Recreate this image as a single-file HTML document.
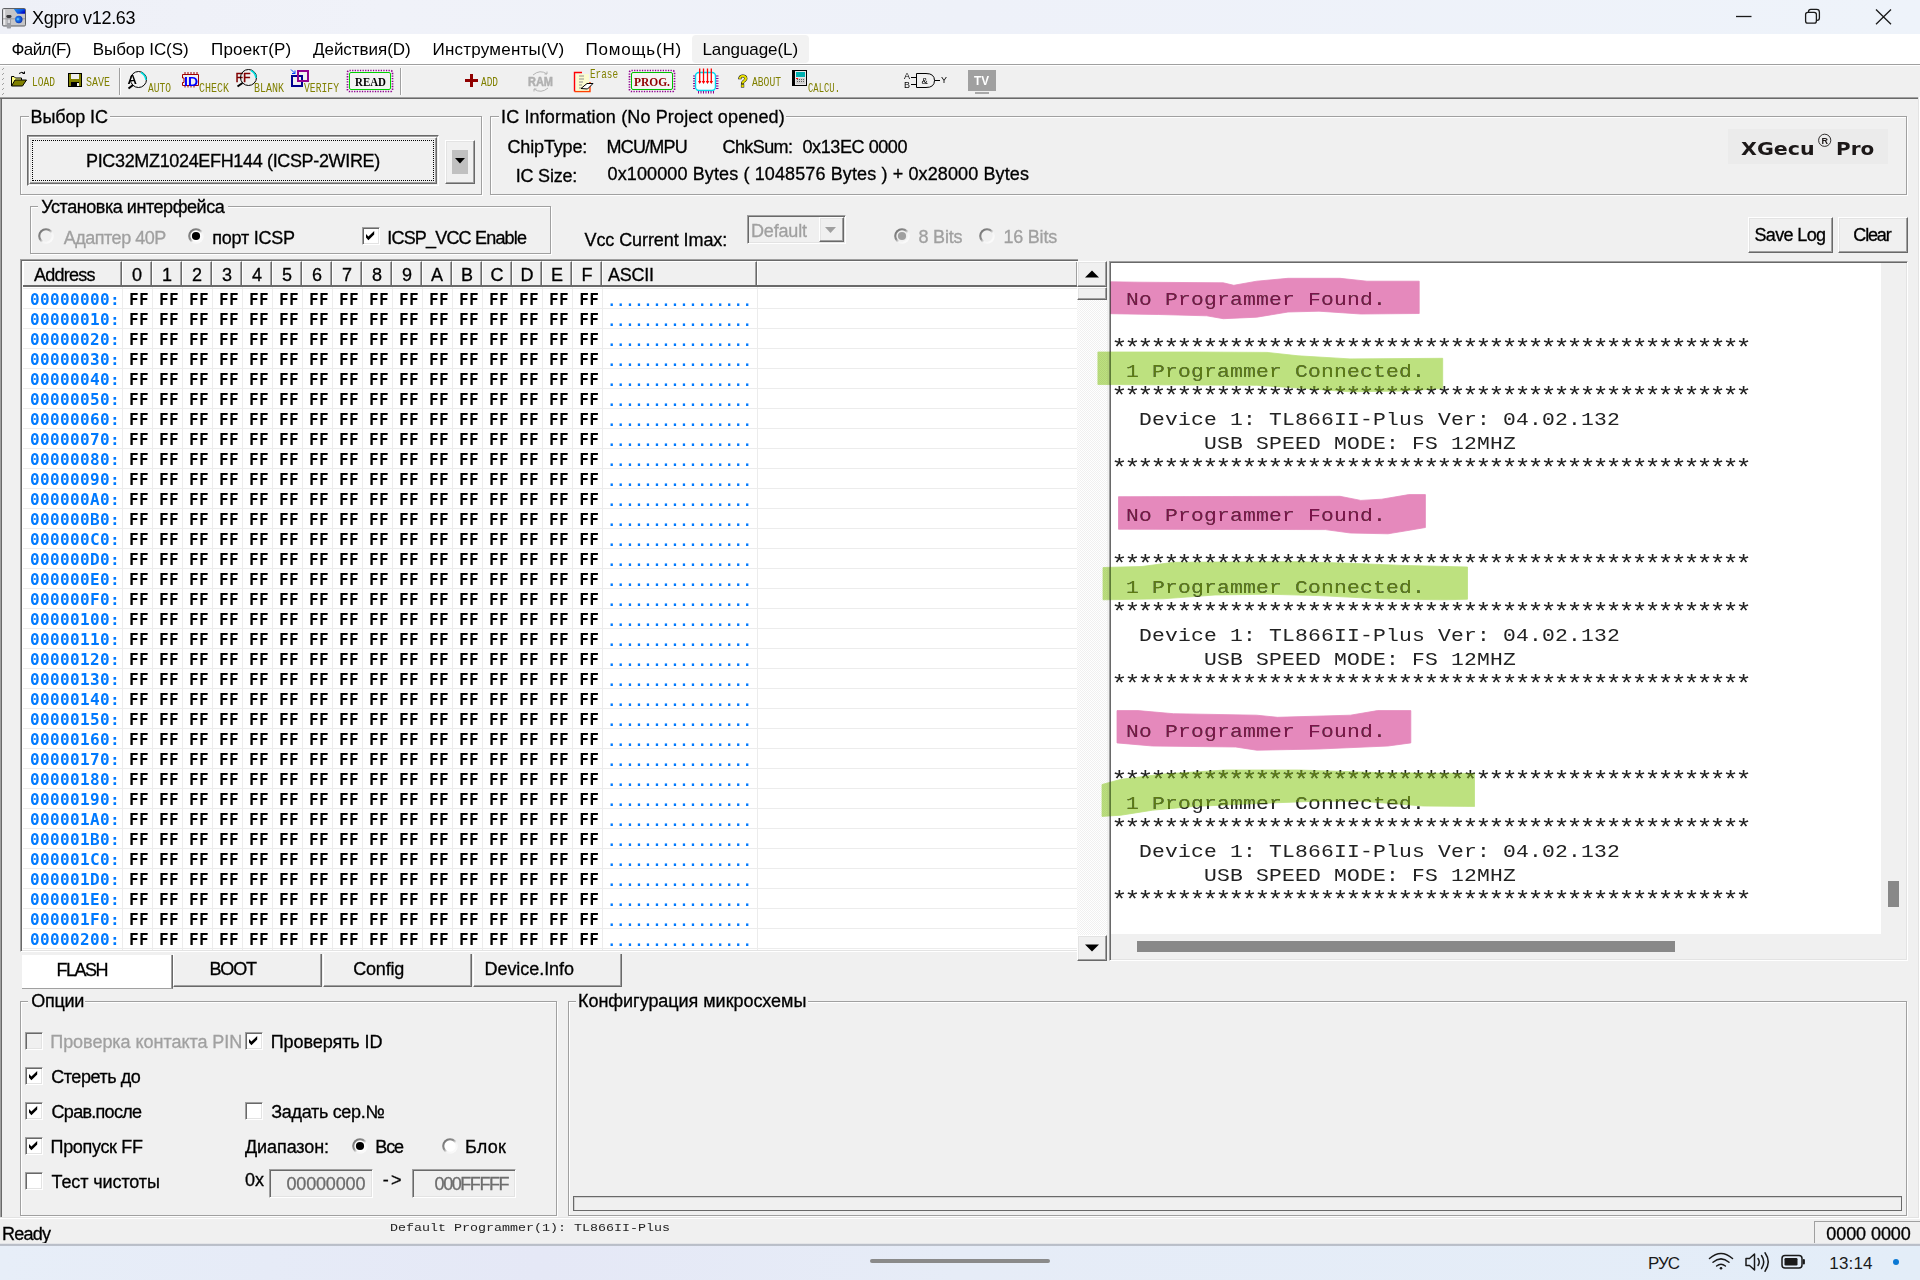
<!DOCTYPE html><html lang="ru"><head><meta charset="utf-8"><title>Xgpro v12.63</title><style>
*{box-sizing:border-box;margin:0;padding:0}
html,body{width:1920px;height:1280px;overflow:hidden;background:#f0f0f0}
body{position:relative;font-family:"Liberation Sans",sans-serif;font-size:18px;color:#000}
.a{position:absolute}
.t{position:absolute;white-space:pre;line-height:20px;height:20px;-webkit-text-stroke:0.3px}
.grp{position:absolute;border:1px solid #a0a0a0;box-shadow:1px 1px 0 #fff, inset 1px 1px 0 #fff}
.gap{position:absolute;height:3px;background:#f0f0f0}
.btn{position:absolute;background:#f0f0f0;border:1px solid;border-color:#fff #696969 #696969 #fff;box-shadow:inset -1px -1px 0 #a0a0a0, inset 1px 1px 0 #e3e3e3}
.sunk{position:absolute;border:1px solid;border-color:#a0a0a0 #fff #fff #a0a0a0;box-shadow:inset 1px 1px 0 #696969, inset -1px -1px 0 #e3e3e3}
.cb{position:absolute;width:18px;height:18px;background:#fff;border:1px solid;border-color:#a0a0a0 #fff #fff #a0a0a0;box-shadow:inset 1px 1px 0 #696969, inset -1px -1px 0 #e3e3e3}
.cb.d{background:#f0f0f0}
.cb svg{position:absolute;left:3px;top:3px}
.rd{position:absolute;width:16px;height:16px}
.mono{font-family:"DejaVu Sans Mono","Liberation Mono",monospace;font-weight:bold;font-size:16px}
.hx{position:absolute;white-space:pre;line-height:20px;height:20px}
.st{font-size:27px !important;letter-spacing:-3.2px !important}
.log{position:absolute;white-space:pre;font-family:"Liberation Mono",monospace;font-size:21.33px;letter-spacing:0.2px;line-height:24px;height:24px;color:#222;transform-origin:0 17.7px;transform:scaleY(0.9)}
</style></head><body>
<div class="a" style="left:0;top:0;width:1920px;height:34px;background:linear-gradient(90deg,#eef0f7 0%,#f0f2f9 20%,#eef1f9 50%,#eef3fa 100%)"></div>
<svg class="a" style="left:2px;top:7px" width="25" height="23" viewBox="2 7 25 23"><defs><linearGradient id="tb1" x1="0" y1="0" x2="1" y2="0.6"><stop offset="0" stop-color="#1e8ae8"/><stop offset="0.6" stop-color="#0a5ce6"/><stop offset="1" stop-color="#0008c8"/></linearGradient><radialGradient id="tb2" cx="0.38" cy="0.45" r="0.65"><stop offset="0" stop-color="#6adcff"/><stop offset="0.35" stop-color="#1a74e8"/><stop offset="1" stop-color="#0a2cb0"/></radialGradient></defs><rect x="2.5" y="8.5" width="23" height="17.5" rx="1.2" fill="#c6c6c8" stroke="#5e6064"/><path d="M13.800 9H25V13.700H17.300Z" fill="url(#tb1)"/><rect x="3.400" y="9.500" width="1.700" height="15.500" fill="#ececee"/><path d="M3 18.800H25" stroke="#8c8c90" stroke-width="0.800"/><rect x="6.300" y="15" width="5.200" height="3" rx="1.400" fill="#38383c"/><rect x="6.800" y="18.500" width="4.200" height="10" rx="0.800" fill="#9c9ea4"/><rect x="7.600" y="19.500" width="2.400" height="3.500" fill="#d8d8dc"/><circle cx="18.800" cy="19.500" r="3.700" fill="url(#tb2)"/></svg>
<div class="t" style="left:32.00px;top:8px;letter-spacing:-0.32px;-webkit-text-stroke:0">Xgpro v12.63</div>
<svg class="a" style="left:1730px;top:6px" width="170" height="24" viewBox="0 0 170 24" fill="none" stroke="#1a1a1a" stroke-width="1.3"><path d="M6 10.5H21.5"/><rect x="75.6" y="6.4" width="10.8" height="10.8" rx="2.2"/><path d="M78.500 6.4V5.7Q78.5 3.4 80.8 3.4H86.6Q89.4 3.4 89.4 6.2V12Q89.4 14.3 87.1 14.3H86.4"/><path d="M146 3.500L161 18.300M161 3.500L146 18.300"/></svg>
<div class="a" style="left:0;top:34px;width:1920px;height:30px;background:#fff"></div>
<div class="a" style="left:692px;top:35px;width:117px;height:28px;border-radius:4px;background:#f2f2f2"></div>
<div class="t" style="left:11.50px;top:40px;letter-spacing:-0.60px;font-size:17px;color:#000;-webkit-text-stroke:0">Файл(F)</div>
<div class="t" style="left:92.75px;top:40px;letter-spacing:-0.07px;font-size:17px;color:#000;-webkit-text-stroke:0">Выбор IC(S)</div>
<div class="t" style="left:211.00px;top:40px;letter-spacing:0.19px;font-size:17px;color:#000;-webkit-text-stroke:0">Проект(P)</div>
<div class="t" style="left:313.00px;top:40px;letter-spacing:-0.04px;font-size:17px;color:#000;-webkit-text-stroke:0">Действия(D)</div>
<div class="t" style="left:432.50px;top:40px;letter-spacing:0.23px;font-size:17px;color:#000;-webkit-text-stroke:0">Инструменты(V)</div>
<div class="t" style="left:585.50px;top:40px;letter-spacing:0.80px;font-size:17px;color:#000;-webkit-text-stroke:0">Помощь(H)</div>
<div class="t" style="left:702.50px;top:40px;letter-spacing:-0.08px;font-size:17px;color:#000;-webkit-text-stroke:0">Language(L)</div>
<div class="a" style="left:0;top:64px;width:1920px;height:35px;background:#f0f0f0;border-top:1px solid #a0a0a0;border-bottom:1px solid #696969;box-shadow:inset 0 1px 0 #fff, inset 0 -1px 0 #a0a0a0"></div>
<svg class="a" style="left:0;top:64px" width="1010" height="34" viewBox="0 64 1010 34" shape-rendering="crispEdges">
<g fill="#a0a0a0"><rect x="2" y="69" width="1" height="1"/><rect x="3" y="68" width="1" height="1"/><rect x="2" y="74" width="1" height="1"/><rect x="3" y="73" width="1" height="1"/><rect x="2" y="79" width="1" height="1"/><rect x="3" y="78" width="1" height="1"/><rect x="2" y="84" width="1" height="1"/><rect x="3" y="83" width="1" height="1"/><rect x="2" y="89" width="1" height="1"/><rect x="3" y="88" width="1" height="1"/><rect x="2" y="94" width="1" height="1"/><rect x="3" y="93" width="1" height="1"/></g>
<g font-family="Liberation Mono, monospace" font-size="10" fill="#808000" shape-rendering="auto">
<text x="32" y="66" transform="translate(0,-0) scale(1,1.3)" textLength="23" lengthAdjust="spacingAndGlyphs">LOAD</text>
<text x="86" y="66" transform="scale(1,1.3)" textLength="24" lengthAdjust="spacingAndGlyphs">SAVE</text>
<text x="148" y="71" transform="scale(1,1.3)" textLength="23" lengthAdjust="spacingAndGlyphs">AUTO</text>
<text x="199" y="71" transform="scale(1,1.3)" textLength="30" lengthAdjust="spacingAndGlyphs">CHECK</text>
<text x="254" y="71" transform="scale(1,1.3)" textLength="30" lengthAdjust="spacingAndGlyphs">BLANK</text>
<text x="304" y="71" transform="scale(1,1.3)" textLength="35" lengthAdjust="spacingAndGlyphs">VERIFY</text>
<text x="481" y="66.5" transform="scale(1,1.3)" textLength="17" lengthAdjust="spacingAndGlyphs">ADD</text>
<text x="590" y="60" transform="scale(1,1.3)" textLength="28" lengthAdjust="spacingAndGlyphs">Erase</text>
<text x="752" y="66.5" transform="scale(1,1.3)" textLength="29" lengthAdjust="spacingAndGlyphs">ABOUT</text>
<text x="808" y="71" transform="scale(1,1.3)" textLength="32" lengthAdjust="spacingAndGlyphs">CALCU.</text>
</g>
<!-- LOAD folder -->
<g shape-rendering="auto"><path d="M11.5 86V76.5H14L15.5 78H21.5V80" fill="#ffff80" stroke="#000"/><path d="M11.5 86L15 80H26.5L22.5 86Z" fill="#808000" stroke="#000"/><path d="M19 73.5Q22 71 24.5 73.5M24.5 73.5V71.5M24.5 73.5H22.5" fill="none" stroke="#000"/></g>
<!-- SAVE floppy -->
<rect x="68.5" y="73.5" width="13" height="13" fill="#808000" stroke="#000"/><rect x="71" y="74" width="8" height="5" fill="#f0f0f0"/><rect x="71" y="82" width="8" height="4" fill="#000"/><rect x="77" y="83" width="2" height="3" fill="#f0f0f0"/>
<!-- separator -->
<rect x="119" y="68" width="1" height="27" fill="#a0a0a0"/><rect x="120" y="68" width="1" height="27" fill="#fff"/>
<!-- AUTO -->
<g shape-rendering="auto"><circle cx="138.5" cy="79.5" r="8" fill="#f4f4f4" stroke="#000"/><path d="M141 72.5Q145.5 75 146 80" fill="none" stroke="#00e0e0" stroke-width="1.6"/><path d="M128.5 88.5L133 85" stroke="#000" stroke-width="2"/><text x="127.5" y="84" font-family="Liberation Sans, sans-serif" font-weight="bold" font-size="13" fill="#000">A</text></g>
<!-- ID CHECK -->
<g shape-rendering="auto"><path d="M182.500 74.500H198.500V85.500H182.500V82.500H184V78H182.500Z" fill="none" stroke="#a00000"/><path d="M185 72v2M188 72v2M191 72v2M194 72v2M197 72v2M185 86v1.500M188 86v1.500M191 86v1.500M194 86v1.500" stroke="#a00000"/><text x="184" y="85.500" font-family="Liberation Sans, sans-serif" font-weight="bold" font-size="12" fill="#0000ff" textLength="14" lengthAdjust="spacingAndGlyphs">ID</text></g>
<!-- BLANK -->
<g shape-rendering="auto"><text x="235.500" y="82" font-family="Liberation Sans, sans-serif" font-size="13.500" fill="#800000" stroke="#800000" stroke-width="0.5" textLength="15" lengthAdjust="spacingAndGlyphs">FF</text><circle cx="248.500" cy="77.500" r="8" fill="none" stroke="#000"/><path d="M251 70.500Q255.500 73 256 78" fill="none" stroke="#00e0e0" stroke-width="1.600"/><path d="M237.500 86.500L242.500 83" stroke="#000" stroke-width="2"/></g>
<!-- VERIFY -->
<rect x="292" y="76" width="10" height="10" fill="none" stroke="#000090" stroke-width="2"/><rect x="298" y="71" width="10" height="10" fill="none" stroke="#900090" stroke-width="2"/><path d="M291 69.500L295 73.500M295 73.500V70.500M295 73.500H292" stroke="#0040ff" fill="none" shape-rendering="auto"/>
<!-- READ -->
<rect x="347.500" y="70.500" width="45" height="21" rx="2" fill="#f4f4f4" stroke="#900090" stroke-width="1.7" stroke-dasharray="1.3 1.3" shape-rendering="auto"/><rect x="349.500" y="72.500" width="41" height="17" rx="1.500" fill="#f4f4f4" stroke="#00d000" shape-rendering="auto"/>
<text x="355" y="86" font-family="Liberation Serif, serif" font-weight="bold" font-size="13" fill="#000" textLength="31" lengthAdjust="spacingAndGlyphs" shape-rendering="auto">READ</text>
<rect x="400" y="68" width="1" height="27" fill="#a0a0a0"/><rect x="401" y="68" width="1" height="27" fill="#fff"/>
<!-- ADD -->
<rect x="470" y="74" width="3" height="13" fill="#900000"/><rect x="465" y="79" width="13" height="3" fill="#900000"/>
<!-- RAM -->
<g shape-rendering="auto"><text x="528" y="86" font-family="Liberation Sans, sans-serif" font-weight="bold" font-size="12.500" fill="#b0b0b0" stroke="#b0b0b0" stroke-width="0.5" textLength="25" lengthAdjust="spacingAndGlyphs">RAM</text><path d="M533 75Q540 69 547 74M547 74V71.500M547 74H544.500M548 88Q541 94 534 89M534 89V91.500M534 89H536.500" fill="none" stroke="#b4b4b4"/></g>
<!-- Erase -->
<g shape-rendering="auto"><path d="M574.500 91.500V72.500H582" fill="none" stroke="#ff0000" stroke-width="1.400"/><path d="M574.500 91.500H590V82" fill="none" stroke="#ff4000" stroke-width="1.400"/><rect x="576" y="74" width="13" height="17" fill="#ffffc0" opacity="0.700"/><path d="M579 76h5M579 79h5M579 82h4M579 85h3M579 88h2" stroke="#909090"/><path d="M581 88.500L587 83.500H593L587.500 89Z" fill="#fff" stroke="#000"/></g>
<!-- PROG -->
<rect x="629.500" y="70.500" width="45" height="21" rx="2" fill="#f4f4f4" stroke="#900090" stroke-width="1.7" stroke-dasharray="1.3 1.3" shape-rendering="auto"/><rect x="631.500" y="72.500" width="41" height="17" rx="1.500" fill="#f4f4f4" stroke="#00c000" shape-rendering="auto"/>
<text x="634" y="86" font-family="Liberation Serif, serif" font-weight="bold" font-size="13" fill="#900000" textLength="36" lengthAdjust="spacingAndGlyphs" shape-rendering="auto">PROG.</text>
<!-- chip arrows -->
<g shape-rendering="auto"><rect x="695.5" y="72.5" width="20" height="18" rx="3.5" fill="#f8ffff" stroke="#00d8f0" stroke-width="1.4"/><path d="M693 76h2M693 78.500h2M693 81h2M693 83.500h2M693 86h2M693 88.500h2M716 76h2.500M716 78.500h2.500M716 81h2.500M716 83.500h2.500M716 86h2.500M716 88.500h2.500M698.500 91v2.500M701 91v2.500M703.500 91v2.500M706 91v2.500M708.500 91v2.500M711 91v2.500M713.500 91v2.500" stroke="#900090"/><path d="M699.700 68.500V83M703.500 68.500V83M707.500 68.500V83M711.300 68.500V83" stroke="#ff0000" stroke-width="1.300"/><path d="M698 81h3.400l-1.700 3zM701.800 81h3.400l-1.700 3zM705.800 81h3.400l-1.700 3zM709.600 81h3.400l-1.700 3z" fill="#ff0000"/></g>
<!-- ? -->
<text x="738" y="86.500" font-family="Liberation Sans, sans-serif" font-weight="bold" font-size="16" fill="#e8e000" stroke="#000" stroke-width="1" paint-order="stroke" shape-rendering="auto">?</text>
<!-- CALCU icon -->
<rect x="792.500" y="70.500" width="14" height="15" fill="#e8e8e8" stroke="#000"/><rect x="792" y="70" width="3" height="16" fill="#000"/><rect x="796" y="72" width="9" height="5" fill="#00b0b0"/><rect x="796" y="78" width="9" height="6" fill="#d0d0d0"/><path d="M797 79h1M799 79h1M801 79h1M803 79h1M797 81h1M799 81h1M801 81h1M803 81h1" stroke="#606060"/><rect x="796" y="78" width="2" height="1" fill="#ff0000"/>
<!-- AND gate -->
<g shape-rendering="auto" fill="none" stroke="#000"><path d="M916.500 73.500H926Q934.500 73.500 934.500 80.500Q934.500 87.500 926 87.500H916.500Z"/><path d="M911 77.500H916.500M911 84.500H916.500M934.500 80.500H940"/></g>
<g font-family="Liberation Sans, sans-serif" font-size="9" fill="#000" shape-rendering="auto"><text x="904" y="79">A</text><text x="904" y="88">B</text><text x="941" y="83">Y</text><text x="921.500" y="84" font-size="9.500">&amp;</text></g>
<!-- TV -->
<rect x="968" y="70" width="28" height="21" fill="#a0a0a0"/><rect x="975" y="92" width="14" height="2" fill="#a8a8a8"/>
<text x="974" y="85" font-family="Liberation Sans, sans-serif" font-weight="bold" font-size="13" fill="#fff" textLength="15" lengthAdjust="spacingAndGlyphs" shape-rendering="auto">TV</text>
</svg>

<div class="a" style="left:0;top:99px;width:1px;height:1118px;background:#a0a0a0"></div>
<div class="a" style="left:1px;top:99px;width:1px;height:1118px;background:#696969"></div>
<div class="a" style="left:1918px;top:97px;width:1px;height:1121px;background:#e3e3e3"></div>
<div class="a" style="left:1919px;top:97px;width:1px;height:1122px;background:#fff"></div>
<svg class="a" style="left:0;top:0" width="0" height="0"><defs><linearGradient id="rg" x1="0" y1="0" x2="1" y2="1"><stop offset="0" stop-color="#6a6a6a"/><stop offset="0.42" stop-color="#8c8c8c"/><stop offset="0.58" stop-color="#f4f4f4"/><stop offset="1" stop-color="#fff"/></linearGradient></defs></svg>
<div class="grp" style="left:20px;top:116px;width:462px;height:79px"></div>
<div class="gap" style="left:28.5px;top:115px;width:81.5px"></div>
<div class="t" style="left:30.50px;top:107px;letter-spacing:-0.11px">Выбор IC</div>
<div class="sunk" style="left:27px;top:135px;width:412px;height:51px;border-color:#696969 #fff #fff #696969;box-shadow:inset 1px 1px 0 #a0a0a0"></div>
<div class="btn" style="left:29px;top:137px;width:408px;height:47px;"></div>
<div class="a" style="left:32px;top:140px;width:402px;height:41px;border:1px dotted #000"></div>
<div class="t" style="left:86.00px;top:151px;letter-spacing:-0.34px">PIC32MZ1024EFH144 (ICSP-2WIRE)</div>
<div class="btn" style="left:445px;top:140px;width:30px;height:44px"></div>
<div class="a" style="left:452px;top:150px;width:16px;height:24px;background:#c0c0c0"></div>
<svg class="a" style="left:455px;top:158px" width="10" height="6"><path d="M0 0H10L5 5.5Z" fill="#000"/></svg>
<div class="grp" style="left:490px;top:116px;width:1417px;height:79px"></div>
<div class="gap" style="left:499px;top:115px;width:286.75px"></div>
<div class="t" style="left:501.00px;top:107px;letter-spacing:0.14px">IC Information (No Project opened)</div>
<div class="t" style="left:507.50px;top:137px;letter-spacing:-0.16px">ChipType:</div>
<div class="t" style="left:606.50px;top:137px;letter-spacing:-0.79px">MCU/MPU</div>
<div class="t" style="left:722.50px;top:137px;letter-spacing:-0.59px">ChkSum:</div>
<div class="t" style="left:802.50px;top:137px;letter-spacing:-0.41px">0x13EC 0000</div>
<div class="t" style="left:515.75px;top:166px;letter-spacing:-0.22px">IC Size:</div>
<div class="t" style="left:607.50px;top:164px;letter-spacing:0.12px">0x100000 Bytes ( 1048576 Bytes ) + 0x28000 Bytes</div>
<div class="a" style="left:1728px;top:129px;width:160px;height:35px;background:#ebebeb"></div>
<svg class="a" style="left:1728px;top:129px" width="160" height="35" viewBox="1728 129 160 35"><g font-family="DejaVu Sans, Liberation Sans, sans-serif" font-weight="bold" font-size="18.4" fill="#1c1818"><text x="1741" y="155.4" textLength="73.7" lengthAdjust="spacingAndGlyphs">XGecu</text><text x="1836" y="155.4" textLength="38.2" lengthAdjust="spacingAndGlyphs">Pro</text></g><circle cx="1824.7" cy="140.3" r="6.1" fill="none" stroke="#1c1818" stroke-width="0.9"/><text x="1821.6" y="143.5" font-family="Liberation Sans, sans-serif" font-weight="bold" font-size="9" fill="#1c1818">R</text></svg>
<div class="grp" style="left:30px;top:206px;width:521px;height:48px"></div>
<div class="gap" style="left:38.25px;top:205px;width:189.5px"></div>
<div class="t" style="left:41.25px;top:197px;letter-spacing:-0.45px">Установка интерфейса</div>
<svg class="rd" style="left:38px;top:228px" width="16" height="16" viewBox="0 0 16 16"><circle cx="8" cy="8" r="7.8" fill="url(#rg)"/><circle cx="8" cy="8" r="5.7" fill="#f0f0f0"/></svg>
<div class="t" style="left:63.75px;top:228px;letter-spacing:-0.49px;color:#a0a0a0">Адаптер 40P</div>
<svg class="rd" style="left:188px;top:228px" width="16" height="16" viewBox="0 0 16 16"><circle cx="8" cy="8" r="7.8" fill="url(#rg)"/><circle cx="8" cy="8" r="5.7" fill="#fff"/><circle cx="8" cy="8" r="4.1" fill="#000"/></svg>
<div class="t" style="left:212.25px;top:228px;letter-spacing:-0.23px">порт ICSP</div>
<div class="cb" style="left:362px;top:227px"><svg width="10" height="10" viewBox="0 0 10 10"><path d="M0 3L2.4 5.6L8.2 0V3.6L2.4 9.2L0 6.6Z" fill="#000"/></svg></div>
<div class="t" style="left:387.25px;top:228px;letter-spacing:-0.81px">ICSP_VCC Enable</div>
<div class="t" style="left:584.50px;top:230px;letter-spacing:-0.08px">Vcc Current Imax:</div>
<div class="sunk" style="left:747px;top:215px;width:99px;height:29px;background:#f0f0f0"></div>
<div class="t" style="left:751.00px;top:221px;letter-spacing:-0.17px;color:#a0a0a0">Default</div>
<div class="btn" style="left:819px;top:217px;width:25px;height:25px"></div>
<svg class="a" style="left:825px;top:227px" width="11" height="6"><path d="M0 0H11L5.5 6Z" fill="#a0a0a0"/></svg>
<svg class="rd" style="left:894px;top:228px" width="16" height="16" viewBox="0 0 16 16"><circle cx="8" cy="8" r="7.8" fill="url(#rg)"/><circle cx="8" cy="8" r="5.7" fill="#f0f0f0"/><circle cx="8" cy="8" r="4.1" fill="#a0a0a0"/></svg>
<div class="t" style="left:918.50px;top:227px;letter-spacing:-0.20px;color:#a0a0a0">8 Bits</div>
<svg class="rd" style="left:979px;top:228px" width="16" height="16" viewBox="0 0 16 16"><circle cx="8" cy="8" r="7.8" fill="url(#rg)"/><circle cx="8" cy="8" r="5.7" fill="#f0f0f0"/></svg>
<div class="t" style="left:1003.40px;top:227px;letter-spacing:-0.20px;color:#a0a0a0">16 Bits</div>
<div class="btn" style="left:1748px;top:217px;width:85px;height:36px"></div>
<div class="t" style="left:1754.50px;top:225px;letter-spacing:-0.65px">Save Log</div>
<div class="btn" style="left:1838px;top:217px;width:70px;height:36px"></div>
<div class="t" style="left:1853.30px;top:225px;letter-spacing:-1.15px">Clear</div>
<div class="a" style="left:20px;top:259px;width:1058px;height:693px;background:#fff;border-left:1px solid #a0a0a0;border-top:1px solid #a0a0a0;border-bottom:1px solid #fff;box-shadow:inset 1px 1px 0 #696969, inset 0 -1px 0 #e3e3e3"></div>
<div class="a" style="left:23px;top:261px;width:1055px;height:26px;background:#f0f0f0;border-bottom:2px solid #696969"></div>
<div class="a" style="left:23px;top:261px;width:99px;height:24px;border-left:1px solid #fff;border-top:1px solid #fff;border-right:1px solid #696969;box-shadow:inset -1px 0 0 #a0a0a0"></div>
<div class="t" style="left:34.00px;top:265px;letter-spacing:-0.74px">Address</div>
<div class="a" style="left:122px;top:261px;width:30px;height:24px;border-left:1px solid #fff;border-top:1px solid #fff;border-right:1px solid #696969;box-shadow:inset -1px 0 0 #a0a0a0"></div>
<div class="t" style="left:122px;top:265px;width:30px;text-align:center">0</div>
<div class="a" style="left:152px;top:261px;width:30px;height:24px;border-left:1px solid #fff;border-top:1px solid #fff;border-right:1px solid #696969;box-shadow:inset -1px 0 0 #a0a0a0"></div>
<div class="t" style="left:152px;top:265px;width:30px;text-align:center">1</div>
<div class="a" style="left:182px;top:261px;width:30px;height:24px;border-left:1px solid #fff;border-top:1px solid #fff;border-right:1px solid #696969;box-shadow:inset -1px 0 0 #a0a0a0"></div>
<div class="t" style="left:182px;top:265px;width:30px;text-align:center">2</div>
<div class="a" style="left:212px;top:261px;width:30px;height:24px;border-left:1px solid #fff;border-top:1px solid #fff;border-right:1px solid #696969;box-shadow:inset -1px 0 0 #a0a0a0"></div>
<div class="t" style="left:212px;top:265px;width:30px;text-align:center">3</div>
<div class="a" style="left:242px;top:261px;width:30px;height:24px;border-left:1px solid #fff;border-top:1px solid #fff;border-right:1px solid #696969;box-shadow:inset -1px 0 0 #a0a0a0"></div>
<div class="t" style="left:242px;top:265px;width:30px;text-align:center">4</div>
<div class="a" style="left:272px;top:261px;width:30px;height:24px;border-left:1px solid #fff;border-top:1px solid #fff;border-right:1px solid #696969;box-shadow:inset -1px 0 0 #a0a0a0"></div>
<div class="t" style="left:272px;top:265px;width:30px;text-align:center">5</div>
<div class="a" style="left:302px;top:261px;width:30px;height:24px;border-left:1px solid #fff;border-top:1px solid #fff;border-right:1px solid #696969;box-shadow:inset -1px 0 0 #a0a0a0"></div>
<div class="t" style="left:302px;top:265px;width:30px;text-align:center">6</div>
<div class="a" style="left:332px;top:261px;width:30px;height:24px;border-left:1px solid #fff;border-top:1px solid #fff;border-right:1px solid #696969;box-shadow:inset -1px 0 0 #a0a0a0"></div>
<div class="t" style="left:332px;top:265px;width:30px;text-align:center">7</div>
<div class="a" style="left:362px;top:261px;width:30px;height:24px;border-left:1px solid #fff;border-top:1px solid #fff;border-right:1px solid #696969;box-shadow:inset -1px 0 0 #a0a0a0"></div>
<div class="t" style="left:362px;top:265px;width:30px;text-align:center">8</div>
<div class="a" style="left:392px;top:261px;width:30px;height:24px;border-left:1px solid #fff;border-top:1px solid #fff;border-right:1px solid #696969;box-shadow:inset -1px 0 0 #a0a0a0"></div>
<div class="t" style="left:392px;top:265px;width:30px;text-align:center">9</div>
<div class="a" style="left:422px;top:261px;width:30px;height:24px;border-left:1px solid #fff;border-top:1px solid #fff;border-right:1px solid #696969;box-shadow:inset -1px 0 0 #a0a0a0"></div>
<div class="t" style="left:422px;top:265px;width:30px;text-align:center">A</div>
<div class="a" style="left:452px;top:261px;width:30px;height:24px;border-left:1px solid #fff;border-top:1px solid #fff;border-right:1px solid #696969;box-shadow:inset -1px 0 0 #a0a0a0"></div>
<div class="t" style="left:452px;top:265px;width:30px;text-align:center">B</div>
<div class="a" style="left:482px;top:261px;width:30px;height:24px;border-left:1px solid #fff;border-top:1px solid #fff;border-right:1px solid #696969;box-shadow:inset -1px 0 0 #a0a0a0"></div>
<div class="t" style="left:482px;top:265px;width:30px;text-align:center">C</div>
<div class="a" style="left:512px;top:261px;width:30px;height:24px;border-left:1px solid #fff;border-top:1px solid #fff;border-right:1px solid #696969;box-shadow:inset -1px 0 0 #a0a0a0"></div>
<div class="t" style="left:512px;top:265px;width:30px;text-align:center">D</div>
<div class="a" style="left:542px;top:261px;width:30px;height:24px;border-left:1px solid #fff;border-top:1px solid #fff;border-right:1px solid #696969;box-shadow:inset -1px 0 0 #a0a0a0"></div>
<div class="t" style="left:542px;top:265px;width:30px;text-align:center">E</div>
<div class="a" style="left:572px;top:261px;width:30px;height:24px;border-left:1px solid #fff;border-top:1px solid #fff;border-right:1px solid #696969;box-shadow:inset -1px 0 0 #a0a0a0"></div>
<div class="t" style="left:572px;top:265px;width:30px;text-align:center">F</div>
<div class="a" style="left:602px;top:261px;width:155px;height:24px;border-left:1px solid #fff;border-top:1px solid #fff;border-right:1px solid #696969;box-shadow:inset -1px 0 0 #a0a0a0"></div>
<div class="t" style="left:608.00px;top:265px;letter-spacing:-0.25px">ASCII</div>
<div class="a" style="left:757px;top:261px;width:321px;height:24px;border-left:1px solid #fff;border-top:1px solid #fff;border-right:1px solid #696969;box-shadow:inset -1px 0 0 #a0a0a0"></div>
<div class="a" style="left:23px;top:287px;width:1055px;height:663px;overflow:hidden;background:#fff">
<div class="a" style="left:0;top:0;width:1055px;height:663px;background-image:linear-gradient(180deg,#ececec 1px,transparent 1px);background-size:100% 20px;background-position:0 1px"></div>
<div class="a" style="left:99px;top:0;width:1px;height:663px;background:#ececec"></div>
<div class="a" style="left:129px;top:0;width:1px;height:663px;background:#ececec"></div>
<div class="a" style="left:159px;top:0;width:1px;height:663px;background:#ececec"></div>
<div class="a" style="left:189px;top:0;width:1px;height:663px;background:#ececec"></div>
<div class="a" style="left:219px;top:0;width:1px;height:663px;background:#ececec"></div>
<div class="a" style="left:249px;top:0;width:1px;height:663px;background:#ececec"></div>
<div class="a" style="left:279px;top:0;width:1px;height:663px;background:#ececec"></div>
<div class="a" style="left:309px;top:0;width:1px;height:663px;background:#ececec"></div>
<div class="a" style="left:339px;top:0;width:1px;height:663px;background:#ececec"></div>
<div class="a" style="left:369px;top:0;width:1px;height:663px;background:#ececec"></div>
<div class="a" style="left:399px;top:0;width:1px;height:663px;background:#ececec"></div>
<div class="a" style="left:429px;top:0;width:1px;height:663px;background:#ececec"></div>
<div class="a" style="left:459px;top:0;width:1px;height:663px;background:#ececec"></div>
<div class="a" style="left:489px;top:0;width:1px;height:663px;background:#ececec"></div>
<div class="a" style="left:519px;top:0;width:1px;height:663px;background:#ececec"></div>
<div class="a" style="left:549px;top:0;width:1px;height:663px;background:#ececec"></div>
<div class="a" style="left:579px;top:0;width:1px;height:663px;background:#ececec"></div>
<div class="a" style="left:734px;top:0;width:1px;height:663px;background:#ececec"></div>
<div class="hx mono" style="left:7px;top:3px;color:#007aff;letter-spacing:0.37px">00000000:</div>
<div class="hx mono" style="left:106px;top:3px;letter-spacing:0.37px">FF FF FF FF FF FF FF FF FF FF FF FF FF FF FF FF</div>
<div class="hx mono" style="left:584.6px;top:4px;color:#007aff;font-size:14px;letter-spacing:0.6px">................</div>
<div class="hx mono" style="left:7px;top:23px;color:#007aff;letter-spacing:0.37px">00000010:</div>
<div class="hx mono" style="left:106px;top:23px;letter-spacing:0.37px">FF FF FF FF FF FF FF FF FF FF FF FF FF FF FF FF</div>
<div class="hx mono" style="left:584.6px;top:24px;color:#007aff;font-size:14px;letter-spacing:0.6px">................</div>
<div class="hx mono" style="left:7px;top:43px;color:#007aff;letter-spacing:0.37px">00000020:</div>
<div class="hx mono" style="left:106px;top:43px;letter-spacing:0.37px">FF FF FF FF FF FF FF FF FF FF FF FF FF FF FF FF</div>
<div class="hx mono" style="left:584.6px;top:44px;color:#007aff;font-size:14px;letter-spacing:0.6px">................</div>
<div class="hx mono" style="left:7px;top:63px;color:#007aff;letter-spacing:0.37px">00000030:</div>
<div class="hx mono" style="left:106px;top:63px;letter-spacing:0.37px">FF FF FF FF FF FF FF FF FF FF FF FF FF FF FF FF</div>
<div class="hx mono" style="left:584.6px;top:64px;color:#007aff;font-size:14px;letter-spacing:0.6px">................</div>
<div class="hx mono" style="left:7px;top:83px;color:#007aff;letter-spacing:0.37px">00000040:</div>
<div class="hx mono" style="left:106px;top:83px;letter-spacing:0.37px">FF FF FF FF FF FF FF FF FF FF FF FF FF FF FF FF</div>
<div class="hx mono" style="left:584.6px;top:84px;color:#007aff;font-size:14px;letter-spacing:0.6px">................</div>
<div class="hx mono" style="left:7px;top:103px;color:#007aff;letter-spacing:0.37px">00000050:</div>
<div class="hx mono" style="left:106px;top:103px;letter-spacing:0.37px">FF FF FF FF FF FF FF FF FF FF FF FF FF FF FF FF</div>
<div class="hx mono" style="left:584.6px;top:104px;color:#007aff;font-size:14px;letter-spacing:0.6px">................</div>
<div class="hx mono" style="left:7px;top:123px;color:#007aff;letter-spacing:0.37px">00000060:</div>
<div class="hx mono" style="left:106px;top:123px;letter-spacing:0.37px">FF FF FF FF FF FF FF FF FF FF FF FF FF FF FF FF</div>
<div class="hx mono" style="left:584.6px;top:124px;color:#007aff;font-size:14px;letter-spacing:0.6px">................</div>
<div class="hx mono" style="left:7px;top:143px;color:#007aff;letter-spacing:0.37px">00000070:</div>
<div class="hx mono" style="left:106px;top:143px;letter-spacing:0.37px">FF FF FF FF FF FF FF FF FF FF FF FF FF FF FF FF</div>
<div class="hx mono" style="left:584.6px;top:144px;color:#007aff;font-size:14px;letter-spacing:0.6px">................</div>
<div class="hx mono" style="left:7px;top:163px;color:#007aff;letter-spacing:0.37px">00000080:</div>
<div class="hx mono" style="left:106px;top:163px;letter-spacing:0.37px">FF FF FF FF FF FF FF FF FF FF FF FF FF FF FF FF</div>
<div class="hx mono" style="left:584.6px;top:164px;color:#007aff;font-size:14px;letter-spacing:0.6px">................</div>
<div class="hx mono" style="left:7px;top:183px;color:#007aff;letter-spacing:0.37px">00000090:</div>
<div class="hx mono" style="left:106px;top:183px;letter-spacing:0.37px">FF FF FF FF FF FF FF FF FF FF FF FF FF FF FF FF</div>
<div class="hx mono" style="left:584.6px;top:184px;color:#007aff;font-size:14px;letter-spacing:0.6px">................</div>
<div class="hx mono" style="left:7px;top:203px;color:#007aff;letter-spacing:0.37px">000000A0:</div>
<div class="hx mono" style="left:106px;top:203px;letter-spacing:0.37px">FF FF FF FF FF FF FF FF FF FF FF FF FF FF FF FF</div>
<div class="hx mono" style="left:584.6px;top:204px;color:#007aff;font-size:14px;letter-spacing:0.6px">................</div>
<div class="hx mono" style="left:7px;top:223px;color:#007aff;letter-spacing:0.37px">000000B0:</div>
<div class="hx mono" style="left:106px;top:223px;letter-spacing:0.37px">FF FF FF FF FF FF FF FF FF FF FF FF FF FF FF FF</div>
<div class="hx mono" style="left:584.6px;top:224px;color:#007aff;font-size:14px;letter-spacing:0.6px">................</div>
<div class="hx mono" style="left:7px;top:243px;color:#007aff;letter-spacing:0.37px">000000C0:</div>
<div class="hx mono" style="left:106px;top:243px;letter-spacing:0.37px">FF FF FF FF FF FF FF FF FF FF FF FF FF FF FF FF</div>
<div class="hx mono" style="left:584.6px;top:244px;color:#007aff;font-size:14px;letter-spacing:0.6px">................</div>
<div class="hx mono" style="left:7px;top:263px;color:#007aff;letter-spacing:0.37px">000000D0:</div>
<div class="hx mono" style="left:106px;top:263px;letter-spacing:0.37px">FF FF FF FF FF FF FF FF FF FF FF FF FF FF FF FF</div>
<div class="hx mono" style="left:584.6px;top:264px;color:#007aff;font-size:14px;letter-spacing:0.6px">................</div>
<div class="hx mono" style="left:7px;top:283px;color:#007aff;letter-spacing:0.37px">000000E0:</div>
<div class="hx mono" style="left:106px;top:283px;letter-spacing:0.37px">FF FF FF FF FF FF FF FF FF FF FF FF FF FF FF FF</div>
<div class="hx mono" style="left:584.6px;top:284px;color:#007aff;font-size:14px;letter-spacing:0.6px">................</div>
<div class="hx mono" style="left:7px;top:303px;color:#007aff;letter-spacing:0.37px">000000F0:</div>
<div class="hx mono" style="left:106px;top:303px;letter-spacing:0.37px">FF FF FF FF FF FF FF FF FF FF FF FF FF FF FF FF</div>
<div class="hx mono" style="left:584.6px;top:304px;color:#007aff;font-size:14px;letter-spacing:0.6px">................</div>
<div class="hx mono" style="left:7px;top:323px;color:#007aff;letter-spacing:0.37px">00000100:</div>
<div class="hx mono" style="left:106px;top:323px;letter-spacing:0.37px">FF FF FF FF FF FF FF FF FF FF FF FF FF FF FF FF</div>
<div class="hx mono" style="left:584.6px;top:324px;color:#007aff;font-size:14px;letter-spacing:0.6px">................</div>
<div class="hx mono" style="left:7px;top:343px;color:#007aff;letter-spacing:0.37px">00000110:</div>
<div class="hx mono" style="left:106px;top:343px;letter-spacing:0.37px">FF FF FF FF FF FF FF FF FF FF FF FF FF FF FF FF</div>
<div class="hx mono" style="left:584.6px;top:344px;color:#007aff;font-size:14px;letter-spacing:0.6px">................</div>
<div class="hx mono" style="left:7px;top:363px;color:#007aff;letter-spacing:0.37px">00000120:</div>
<div class="hx mono" style="left:106px;top:363px;letter-spacing:0.37px">FF FF FF FF FF FF FF FF FF FF FF FF FF FF FF FF</div>
<div class="hx mono" style="left:584.6px;top:364px;color:#007aff;font-size:14px;letter-spacing:0.6px">................</div>
<div class="hx mono" style="left:7px;top:383px;color:#007aff;letter-spacing:0.37px">00000130:</div>
<div class="hx mono" style="left:106px;top:383px;letter-spacing:0.37px">FF FF FF FF FF FF FF FF FF FF FF FF FF FF FF FF</div>
<div class="hx mono" style="left:584.6px;top:384px;color:#007aff;font-size:14px;letter-spacing:0.6px">................</div>
<div class="hx mono" style="left:7px;top:403px;color:#007aff;letter-spacing:0.37px">00000140:</div>
<div class="hx mono" style="left:106px;top:403px;letter-spacing:0.37px">FF FF FF FF FF FF FF FF FF FF FF FF FF FF FF FF</div>
<div class="hx mono" style="left:584.6px;top:404px;color:#007aff;font-size:14px;letter-spacing:0.6px">................</div>
<div class="hx mono" style="left:7px;top:423px;color:#007aff;letter-spacing:0.37px">00000150:</div>
<div class="hx mono" style="left:106px;top:423px;letter-spacing:0.37px">FF FF FF FF FF FF FF FF FF FF FF FF FF FF FF FF</div>
<div class="hx mono" style="left:584.6px;top:424px;color:#007aff;font-size:14px;letter-spacing:0.6px">................</div>
<div class="hx mono" style="left:7px;top:443px;color:#007aff;letter-spacing:0.37px">00000160:</div>
<div class="hx mono" style="left:106px;top:443px;letter-spacing:0.37px">FF FF FF FF FF FF FF FF FF FF FF FF FF FF FF FF</div>
<div class="hx mono" style="left:584.6px;top:444px;color:#007aff;font-size:14px;letter-spacing:0.6px">................</div>
<div class="hx mono" style="left:7px;top:463px;color:#007aff;letter-spacing:0.37px">00000170:</div>
<div class="hx mono" style="left:106px;top:463px;letter-spacing:0.37px">FF FF FF FF FF FF FF FF FF FF FF FF FF FF FF FF</div>
<div class="hx mono" style="left:584.6px;top:464px;color:#007aff;font-size:14px;letter-spacing:0.6px">................</div>
<div class="hx mono" style="left:7px;top:483px;color:#007aff;letter-spacing:0.37px">00000180:</div>
<div class="hx mono" style="left:106px;top:483px;letter-spacing:0.37px">FF FF FF FF FF FF FF FF FF FF FF FF FF FF FF FF</div>
<div class="hx mono" style="left:584.6px;top:484px;color:#007aff;font-size:14px;letter-spacing:0.6px">................</div>
<div class="hx mono" style="left:7px;top:503px;color:#007aff;letter-spacing:0.37px">00000190:</div>
<div class="hx mono" style="left:106px;top:503px;letter-spacing:0.37px">FF FF FF FF FF FF FF FF FF FF FF FF FF FF FF FF</div>
<div class="hx mono" style="left:584.6px;top:504px;color:#007aff;font-size:14px;letter-spacing:0.6px">................</div>
<div class="hx mono" style="left:7px;top:523px;color:#007aff;letter-spacing:0.37px">000001A0:</div>
<div class="hx mono" style="left:106px;top:523px;letter-spacing:0.37px">FF FF FF FF FF FF FF FF FF FF FF FF FF FF FF FF</div>
<div class="hx mono" style="left:584.6px;top:524px;color:#007aff;font-size:14px;letter-spacing:0.6px">................</div>
<div class="hx mono" style="left:7px;top:543px;color:#007aff;letter-spacing:0.37px">000001B0:</div>
<div class="hx mono" style="left:106px;top:543px;letter-spacing:0.37px">FF FF FF FF FF FF FF FF FF FF FF FF FF FF FF FF</div>
<div class="hx mono" style="left:584.6px;top:544px;color:#007aff;font-size:14px;letter-spacing:0.6px">................</div>
<div class="hx mono" style="left:7px;top:563px;color:#007aff;letter-spacing:0.37px">000001C0:</div>
<div class="hx mono" style="left:106px;top:563px;letter-spacing:0.37px">FF FF FF FF FF FF FF FF FF FF FF FF FF FF FF FF</div>
<div class="hx mono" style="left:584.6px;top:564px;color:#007aff;font-size:14px;letter-spacing:0.6px">................</div>
<div class="hx mono" style="left:7px;top:583px;color:#007aff;letter-spacing:0.37px">000001D0:</div>
<div class="hx mono" style="left:106px;top:583px;letter-spacing:0.37px">FF FF FF FF FF FF FF FF FF FF FF FF FF FF FF FF</div>
<div class="hx mono" style="left:584.6px;top:584px;color:#007aff;font-size:14px;letter-spacing:0.6px">................</div>
<div class="hx mono" style="left:7px;top:603px;color:#007aff;letter-spacing:0.37px">000001E0:</div>
<div class="hx mono" style="left:106px;top:603px;letter-spacing:0.37px">FF FF FF FF FF FF FF FF FF FF FF FF FF FF FF FF</div>
<div class="hx mono" style="left:584.6px;top:604px;color:#007aff;font-size:14px;letter-spacing:0.6px">................</div>
<div class="hx mono" style="left:7px;top:623px;color:#007aff;letter-spacing:0.37px">000001F0:</div>
<div class="hx mono" style="left:106px;top:623px;letter-spacing:0.37px">FF FF FF FF FF FF FF FF FF FF FF FF FF FF FF FF</div>
<div class="hx mono" style="left:584.6px;top:624px;color:#007aff;font-size:14px;letter-spacing:0.6px">................</div>
<div class="hx mono" style="left:7px;top:643px;color:#007aff;letter-spacing:0.37px">00000200:</div>
<div class="hx mono" style="left:106px;top:643px;letter-spacing:0.37px">FF FF FF FF FF FF FF FF FF FF FF FF FF FF FF FF</div>
<div class="hx mono" style="left:584.6px;top:644px;color:#007aff;font-size:14px;letter-spacing:0.6px">................</div>
</div>
<div class="a" style="left:1077px;top:261px;width:30px;height:700px;background:repeating-conic-gradient(#fff 0 25%,#f0f0f0 0 50%) 0 0/2px 2px"></div>
<div class="btn" style="left:1077px;top:261px;width:30px;height:26px"></div>
<svg class="a" style="left:1085px;top:270px" width="14" height="8"><path d="M0 7.5H14L7 0.5Z" fill="#000"/></svg>
<div class="btn" style="left:1077px;top:287px;width:30px;height:13px"></div>
<div class="btn" style="left:1077px;top:935px;width:30px;height:26px"></div>
<svg class="a" style="left:1085px;top:944px" width="14" height="8"><path d="M0 0.5H14L7 7.5Z" fill="#000"/></svg>
<div class="sunk" style="left:1109px;top:261px;width:799px;height:700px;background:#f0f0f0"></div>
<div class="a" style="left:1111px;top:263px;width:770px;height:671px;background:#fff"></div>
<div class="log" style="left:1113px;top:286.5px"> No Programmer Found.</div>
<div class="log st" style="left:1111.3px;top:336.5px">*************************************************</div>
<div class="log" style="left:1113px;top:358.5px"> 1 Programmer Connected.</div>
<div class="log st" style="left:1111.3px;top:384.5px">*************************************************</div>
<div class="log" style="left:1113px;top:406.5px">  Device 1: TL866II-Plus Ver: 04.02.132</div>
<div class="log" style="left:1113px;top:430.5px">       USB SPEED MODE: FS 12MHZ</div>
<div class="log st" style="left:1111.3px;top:456.5px">*************************************************</div>
<div class="log" style="left:1113px;top:502.5px"> No Programmer Found.</div>
<div class="log st" style="left:1111.3px;top:552.5px">*************************************************</div>
<div class="log" style="left:1113px;top:574.5px"> 1 Programmer Connected.</div>
<div class="log st" style="left:1111.3px;top:600.5px">*************************************************</div>
<div class="log" style="left:1113px;top:622.5px">  Device 1: TL866II-Plus Ver: 04.02.132</div>
<div class="log" style="left:1113px;top:646.5px">       USB SPEED MODE: FS 12MHZ</div>
<div class="log st" style="left:1111.3px;top:672.5px">*************************************************</div>
<div class="log" style="left:1113px;top:718.5px"> No Programmer Found.</div>
<div class="log st" style="left:1111.3px;top:768.5px">*************************************************</div>
<div class="log" style="left:1113px;top:790.5px"> 1 Programmer Connected.</div>
<div class="log st" style="left:1111.3px;top:816.5px">*************************************************</div>
<div class="log" style="left:1113px;top:838.5px">  Device 1: TL866II-Plus Ver: 04.02.132</div>
<div class="log" style="left:1113px;top:862.5px">       USB SPEED MODE: FS 12MHZ</div>
<div class="log st" style="left:1111.3px;top:888.5px">*************************************************</div>
<div class="a" style="left:1137px;top:941px;width:538px;height:11px;background:#888"></div>
<div class="a" style="left:1888px;top:881px;width:11px;height:26px;background:#888"></div>
<svg class="a" style="left:1090px;top:270px;mix-blend-mode:multiply" width="400" height="560"><polygon points="20.8,11.8 48.0,12.2 133.3,12.8 143.8,15.3 166.7,11.2 198.0,8.3 250.0,8.3 277.0,11.2 329.2,11.2 329.2,43.5 270.8,44.0 229.0,41.2 198.0,42.0 166.7,47.2 133.3,48.7 116.7,45.8 68.8,44.5 20.8,43.7" fill="#e589bc" stroke="#e589bc" stroke-width="0.8" stroke-linejoin="round"/><polygon points="28.5,226.7 250.0,226.3 270.8,230.4 291.7,229.2 318.8,224.6 335.4,224.6 335.4,257.5 320.8,260.0 298.0,263.8 260.4,263.0 235.4,259.6 28.5,259.2" fill="#e589bc" stroke="#e589bc" stroke-width="0.8" stroke-linejoin="round"/><polygon points="27.0,440.6 48.0,440.6 83.3,443.7 166.7,445.2 187.5,447.3 260.4,445.2 287.5,440.6 320.8,440.6 320.8,472.9 298.0,476.0 229.0,479.0 166.7,480.2 145.8,477.0 62.5,476.0 27.0,472.9" fill="#e589bc" stroke="#e589bc" stroke-width="0.8" stroke-linejoin="round"/><polygon points="7.9,82.0 104.0,82.0 177.0,82.4 208.0,85.8 260.0,88.9 352.7,88.3 352.7,118.5 312.5,121.0 260.0,121.8 208.0,118.0 166.7,115.3 104.0,115.0 7.9,114.5" fill="#bde17f" stroke="#bde17f" stroke-width="0.8" stroke-linejoin="round"/><polygon points="13.0,297.5 52.0,296.5 83.3,292.3 208.3,291.7 260.4,293.3 312.5,295.4 377.5,297.0 377.5,329.2 354.0,329.8 291.7,328.8 229.0,325.6 177.0,324.2 125.0,325.0 73.0,328.8 13.0,329.8" fill="#bde17f" stroke="#bde17f" stroke-width="0.8" stroke-linejoin="round"/><polygon points="12.0,514.5 31.0,509.3 73.0,504.0 135.4,500.0 208.3,500.0 291.7,502.7 384.6,503.5 384.6,536.4 333.3,536.0 270.8,531.2 229.0,531.2 187.5,532.7 104.0,536.4 62.5,540.2 31.0,545.2 12.0,546.4" fill="#bde17f" stroke="#bde17f" stroke-width="0.8" stroke-linejoin="round"/></svg>
<svg class="a" style="left:1090px;top:270px;mix-blend-mode:lighten" width="400" height="560"><polygon points="20.8,11.8 48.0,12.2 133.3,12.8 143.8,15.3 166.7,11.2 198.0,8.3 250.0,8.3 277.0,11.2 329.2,11.2 329.2,43.5 270.8,44.0 229.0,41.2 198.0,42.0 166.7,47.2 133.3,48.7 116.7,45.8 68.8,44.5 20.8,43.7" fill="#7a0a4a"/><polygon points="28.5,226.7 250.0,226.3 270.8,230.4 291.7,229.2 318.8,224.6 335.4,224.6 335.4,257.5 320.8,260.0 298.0,263.8 260.4,263.0 235.4,259.6 28.5,259.2" fill="#7a0a4a"/><polygon points="27.0,440.6 48.0,440.6 83.3,443.7 166.7,445.2 187.5,447.3 260.4,445.2 287.5,440.6 320.8,440.6 320.8,472.9 298.0,476.0 229.0,479.0 166.7,480.2 145.8,477.0 62.5,476.0 27.0,472.9" fill="#7a0a4a"/><polygon points="7.9,82.0 104.0,82.0 177.0,82.4 208.0,85.8 260.0,88.9 352.7,88.3 352.7,118.5 312.5,121.0 260.0,121.8 208.0,118.0 166.7,115.3 104.0,115.0 7.9,114.5" fill="#5c7a0c"/><polygon points="13.0,297.5 52.0,296.5 83.3,292.3 208.3,291.7 260.4,293.3 312.5,295.4 377.5,297.0 377.5,329.2 354.0,329.8 291.7,328.8 229.0,325.6 177.0,324.2 125.0,325.0 73.0,328.8 13.0,329.8" fill="#5c7a0c"/><polygon points="12.0,514.5 31.0,509.3 73.0,504.0 135.4,500.0 208.3,500.0 291.7,502.7 384.6,503.5 384.6,536.4 333.3,536.0 270.8,531.2 229.0,531.2 187.5,532.7 104.0,536.4 62.5,540.2 31.0,545.2 12.0,546.4" fill="#5c7a0c"/></svg>
<div class="a" style="left:22px;top:955px;width:151px;height:34px;background:#fff;border-right:1px solid #696969;border-bottom:1px solid #a0a0a0;box-shadow:inset -1px 0 0 #a0a0a0"></div>
<div class="t" style="left:56.50px;top:960px;letter-spacing:-1.50px">FLASH</div>
<div class="a" style="left:173px;top:954px;width:149px;height:33px;border-left:1px solid #fff;border-right:1px solid #696969;border-bottom:1px solid #696969;box-shadow:inset -1px -1px 0 #a0a0a0"></div>
<div class="t" style="left:209.50px;top:959px;letter-spacing:-1.17px">BOOT</div>
<div class="a" style="left:323px;top:954px;width:149px;height:33px;border-left:1px solid #fff;border-right:1px solid #696969;border-bottom:1px solid #696969;box-shadow:inset -1px -1px 0 #a0a0a0"></div>
<div class="t" style="left:353.25px;top:959px;letter-spacing:-0.20px">Config</div>
<div class="a" style="left:473px;top:954px;width:149px;height:33px;border-left:1px solid #fff;border-right:1px solid #696969;border-bottom:1px solid #696969;box-shadow:inset -1px -1px 0 #a0a0a0"></div>
<div class="t" style="left:484.50px;top:959px;letter-spacing:-0.05px">Device.Info</div>
<div class="grp" style="left:20px;top:1001px;width:537px;height:215px"></div>
<div class="gap" style="left:28.25px;top:1000px;width:57.0px"></div>
<div class="t" style="left:31.25px;top:991px;letter-spacing:-0.28px">Опции</div>
<div class="grp" style="left:568px;top:1001px;width:1339px;height:215px"></div>
<div class="gap" style="left:576px;top:1000px;width:231.5px"></div>
<div class="t" style="left:578.00px;top:991px;letter-spacing:-0.04px">Конфигурация микросхемы</div>
<div class="cb d" style="left:25px;top:1032px"></div>
<div class="t" style="left:50.25px;top:1032px;letter-spacing:-0.04px;color:#a0a0a0">Проверка контакта PIN</div>
<div class="cb" style="left:245px;top:1032px"><svg width="10" height="10" viewBox="0 0 10 10"><path d="M0 3L2.4 5.6L8.2 0V3.6L2.4 9.2L0 6.6Z" fill="#000"/></svg></div>
<div class="t" style="left:270.75px;top:1032px;letter-spacing:-0.07px">Проверять ID</div>
<div class="cb" style="left:25px;top:1067px"><svg width="10" height="10" viewBox="0 0 10 10"><path d="M0 3L2.4 5.6L8.2 0V3.6L2.4 9.2L0 6.6Z" fill="#000"/></svg></div>
<div class="t" style="left:51.25px;top:1067px;letter-spacing:-0.46px">Стереть до</div>
<div class="cb" style="left:25px;top:1102px"><svg width="10" height="10" viewBox="0 0 10 10"><path d="M0 3L2.4 5.6L8.2 0V3.6L2.4 9.2L0 6.6Z" fill="#000"/></svg></div>
<div class="t" style="left:51.60px;top:1102px;letter-spacing:-0.72px">Срав.после</div>
<div class="cb" style="left:245px;top:1102px"></div>
<div class="t" style="left:271.25px;top:1102px;letter-spacing:-0.32px">Задать сер.№</div>
<div class="cb" style="left:25px;top:1137px"><svg width="10" height="10" viewBox="0 0 10 10"><path d="M0 3L2.4 5.6L8.2 0V3.6L2.4 9.2L0 6.6Z" fill="#000"/></svg></div>
<div class="t" style="left:50.60px;top:1137px;letter-spacing:-0.34px">Пропуск FF</div>
<div class="t" style="left:245.00px;top:1137px;letter-spacing:-0.09px">Диапазон:</div>
<svg class="rd" style="left:352px;top:1138px" width="16" height="16" viewBox="0 0 16 16"><circle cx="8" cy="8" r="7.8" fill="url(#rg)"/><circle cx="8" cy="8" r="5.7" fill="#fff"/><circle cx="8" cy="8" r="4.1" fill="#000"/></svg>
<div class="t" style="left:375.25px;top:1137px;letter-spacing:-1.13px">Все</div>
<svg class="rd" style="left:442px;top:1138px" width="16" height="16" viewBox="0 0 16 16"><circle cx="8" cy="8" r="7.8" fill="url(#rg)"/><circle cx="8" cy="8" r="5.7" fill="#fff"/></svg>
<div class="t" style="left:465.00px;top:1137px;letter-spacing:0.22px">Блок</div>
<div class="cb" style="left:25px;top:1172px"></div>
<div class="t" style="left:51.60px;top:1172px;letter-spacing:-0.11px">Тест чистоты</div>
<div class="t" style="left:245.00px;top:1170px;letter-spacing:-0.01px">0x</div>
<div class="sunk" style="left:269px;top:1169px;width:104px;height:29px;background:#f0f0f0"></div>
<div class="t" style="left:286.40px;top:1174px;letter-spacing:-0.14px;color:#6d6d6d">00000000</div>
<div class="t" style="left:382.70px;top:1170px;letter-spacing:2.31px">-&gt;</div>
<div class="sunk" style="left:412px;top:1169px;width:104px;height:29px;background:#f0f0f0"></div>
<div class="t" style="left:434.60px;top:1174px;letter-spacing:-1.44px;color:#6d6d6d">000FFFFF</div>
<div class="a" style="left:573px;top:1196px;width:1329px;height:15px;border:1px solid #696969;box-shadow:inset 1px 1px 0 #d0d0d0"></div>
<div class="a" style="left:0;top:1217px;width:1919px;height:1px;background:#e3e3e3"></div><div class="a" style="left:0;top:1218px;width:1920px;height:1px;background:#fff"></div>
<div class="t" style="left:2.00px;top:1224px;letter-spacing:-0.76px">Ready</div>
<div class="t" style="left:390px;top:1218px;font-family:'Liberation Mono', monospace;font-size:13.33px;color:#222;-webkit-text-stroke:0;transform-origin:0 15px;transform:scaleY(0.88)">Default Programmer(1): TL866II-Plus</div>
<div class="a" style="left:1814px;top:1221px;width:106px;height:24px;border-left:1px solid #a0a0a0;border-top:1px solid #a0a0a0"></div>
<div class="t" style="left:1826.30px;top:1224px;letter-spacing:-0.07px">0000 0000</div>
<div class="a" style="left:0;top:1243px;width:1920px;height:3px;background:linear-gradient(180deg,#e4e5e8 0,#e4e5e8 33%,#b9bdc6 33%,#bcc1cb 100%)"></div>
<div class="a" style="left:0;top:1246px;width:1920px;height:34px;background:linear-gradient(90deg,#e7eef8 0%,#e5e8f6 28%,#e6ecf7 50%,#e3edf8 100%)"></div>
<div class="a" style="left:870px;top:1259px;width:180px;height:4px;border-radius:2px;background:#8a8a8a"></div>
<div class="t" style="left:1648.00px;top:1254px;letter-spacing:-1.03px;font-size:17px;color:#1a1a1a;-webkit-text-stroke:0">РУС</div>
<div class="t" style="left:1829.30px;top:1254px;letter-spacing:0.15px;font-size:17px;color:#1a1a1a;-webkit-text-stroke:0">13:14</div>
<div class="a" style="left:1893px;top:1259px;width:6px;height:6px;border-radius:50%;background:#0a78d4"></div>
<svg class="a" style="left:1706px;top:1250px" width="104" height="24" viewBox="1706 1250 104 24" fill="none" stroke="#1a1a1a" stroke-width="1.5" stroke-linecap="round"><path d="M1709.5 1258.5Q1721 1248.5 1732.5 1258.5"/><path d="M1713 1262.3Q1721 1255.5 1729 1262.3"/><path d="M1716.6 1266Q1721 1262.5 1725.4 1266"/><circle cx="1721" cy="1268.3" r="1.3" fill="#1a1a1a" stroke="none"/><path d="M1746 1258.5H1749.5L1754.5 1254V1270L1749.5 1265.5H1746Z" stroke-linejoin="round"/><path d="M1758 1258.5Q1760.5 1262 1758 1265.5"/><path d="M1761.5 1255.5Q1766 1262 1761.5 1268.5"/><path d="M1765 1252.800Q1771.5 1262 1765 1271.2"/><rect x="1782" y="1255.5" width="20" height="12.5" rx="3"/><rect x="1784.5" y="1258" width="13" height="7.5" rx="1.2" fill="#1a1a1a" stroke="none"/><path d="M1803.8 1260V1263.5" stroke-width="2.2"/></svg>
</body></html>
